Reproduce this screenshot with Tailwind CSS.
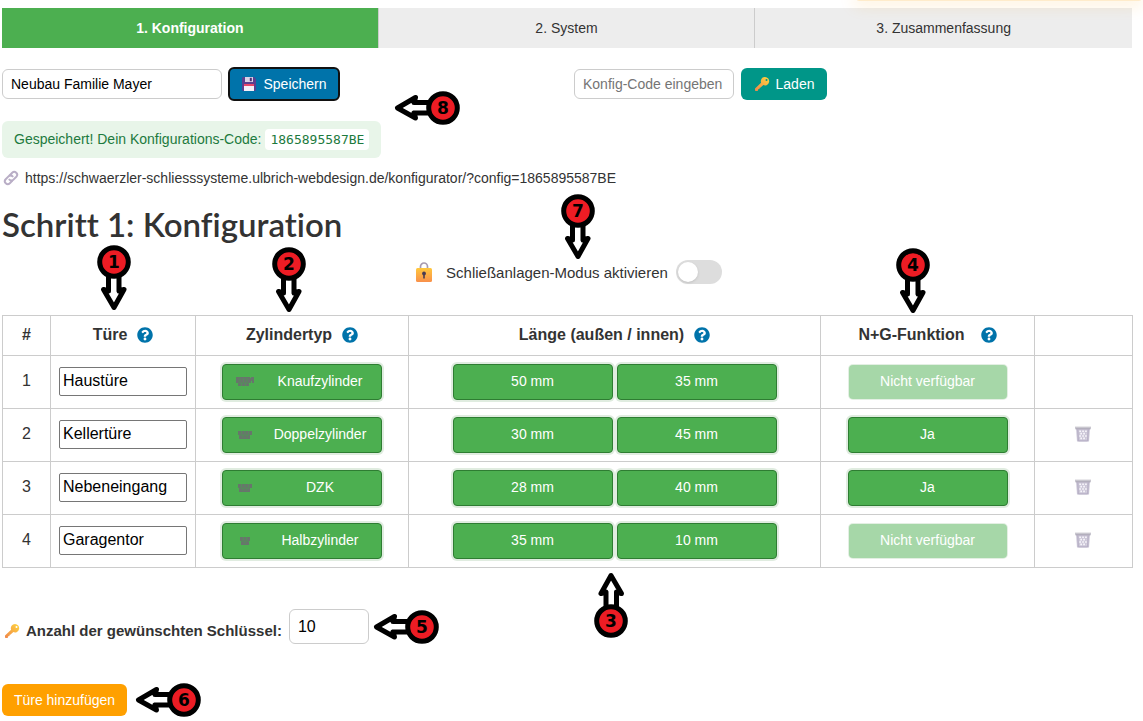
<!DOCTYPE html>
<html lang="de">
<head>
<meta charset="utf-8">
<meta name="viewport" content="width=device-width, initial-scale=1">
<title>Konfigurator</title>
<script src="https://cdn.jsdelivr.net/npm/@tailwindcss/browser@4"></script>
</head>
<body class="bg-white font-['Liberation_Sans',Arial,sans-serif] text-sm text-[#333]">
<svg class="absolute size-0" aria-hidden="true">
  <defs>
    <linearGradient id="gold" x1="0" y1="0" x2="0" y2="1"><stop offset="0" stop-color="#ffc83d"/><stop offset="1" stop-color="#f9904b"/></linearGradient>
    <linearGradient id="gold2" x1="1" y1="0" x2="0" y2="1"><stop offset="0" stop-color="#ffd53d"/><stop offset="1" stop-color="#f0864b"/></linearGradient>
    <symbol id="help" viewBox="0 0 512 512"><path fill="currentColor" d="M504 256c0 136.997-111.043 248-248 248S8 392.997 8 256C8 119.083 119.043 8 256 8s248 111.083 248 248zM262.655 90c-54.497 0-89.255 22.957-116.549 63.758-3.536 5.286-2.353 12.415 2.715 16.258l34.699 26.31c5.205 3.947 12.621 3.008 16.665-2.122 17.864-22.658 30.113-35.797 57.303-35.797 20.429 0 45.698 13.148 45.698 32.958 0 14.976-12.363 22.667-32.534 33.976C247.128 238.528 216 254.941 216 296v4c0 6.627 5.373 12 12 12h56c6.627 0 12-5.373 12-12v-1.333c0-28.462 83.186-29.647 83.186-106.667 0-58.002-60.165-102-116.531-102zM256 338c-25.365 0-46 20.635-46 46 0 25.364 20.635 46 46 46s46-20.636 46-46c0-25.365-20.635-46-46-46z"/></symbol>
    <symbol id="key" viewBox="0 0 16 16"><path fill="url(#gold2)" fill-rule="evenodd" d="M11 1a4.200 4.200 0 0 0-3.900 5.700L1.300 12.200c-.2.200-.3.400-.3.700V14c0 .6.400 1 1 1h1.200c.5 0 .8-.3.800-.8v-.9h.9c.4 0 .7-.3.700-.7v-.9h.7l3.100-2.600A4.200 4.200 0 1 0 11 1zm1.500 1.900a1 1 0 1 1 0 2 1 1 0 0 1 0-2z"/></symbol>
    <symbol id="trash" viewBox="0 0 16 16"><path fill="#ccc7d8" d="M1 2h14l-1 13.500H2z"/><path fill="none" stroke="#f8f6fb" stroke-width="1.600" stroke-dasharray="1.700 1.200" d="M4.300 5.200h8"/><path fill="none" stroke="#f8f6fb" stroke-width="1.600" stroke-dasharray="1.700 1.200" d="M5.300 7.600h6M4.300 10h8M5.300 12.400h6"/><path fill="none" stroke="#b3acc2" stroke-width="1" d="M2.800 3.500l.5 11.400h9.400l.5-11.400"/><path fill="#c9c7cf" d="M0 .6h16v2H0z"/><path fill="#a49fb0" d="M.4 2.400h15.200v.9H.4z"/></symbol>
    <symbol id="arrow" viewBox="0 0 34 66"><path fill="#fff" stroke="#000" stroke-width="5" stroke-linejoin="round" d="M11.500 29v17l-5-1.500L17 62.500l10-18-5 1.500V29"/><circle cx="17" cy="17" r="14.300" fill="#ed1c24" stroke="#000" stroke-width="5"/></symbol>
  </defs>
</svg>

<div class="relative overflow-hidden">
  <!-- notice that reaches in from above the page -->
  <div class="absolute right-0 -top-2 z-10 h-[9px] w-72 rounded-lg bg-[#ffeccb] shadow-[0_3px_16px_2px_rgba(255,165,0,0.14)]"></div>

  <main class="pt-2 pr-[11px] pb-1 pl-0.5">
    <nav class="grid h-10 grid-cols-3">
      <a href="#" class="flex items-center justify-center border-r border-[#ccc] bg-[#4caf50] font-bold text-white">1. Konfiguration</a>
      <a href="#" class="flex items-center justify-center border-r border-[#ccc] bg-[#ededed]">2. System</a>
      <a href="#" class="flex items-center justify-center bg-[#ededed]">3. Zusammenfassung</a>
    </nav>

    <div class="mt-[19px] grid grid-cols-2 gap-3.5">
      <div class="flex items-center gap-1.5">
        <input type="text" aria-label="Projektname" value="Neubau Familie Mayer" class="h-[30px] w-[220px] rounded-md border border-[#ccc] px-2 text-black">
        <button class="flex h-[34px] w-28 items-center justify-center gap-1.5 rounded-md border-2 border-[#111] bg-[#0073aa] text-white">
          <svg class="size-4" viewBox="0 0 16 16"><path fill="#5b3f8f" d="M1 2.500C1 1.700 1.700 1 2.500 1H13l2 2v10.500c0 .8-.7 1.500-1.500 1.500h-11C1.700 15 1 14.300 1 13.500z"/><path fill="#d9d2e6" d="M4 1h8v5H4z"/><path fill="#4a2f78" d="M8.800 1.800h2v3.400h-2z"/><path fill="#f4f1fa" d="M3 8.500h10V15H3z"/><path fill="#e8486a" d="M3 8h10v2H3z"/></svg>
          Speichern
        </button>
      </div>
      <div class="flex items-center gap-[7px]">
        <input type="text" aria-label="Konfig-Code" placeholder="Konfig-Code eingeben" class="h-[30px] w-40 rounded-md border border-[#ccc] px-2 placeholder:text-[#757575]">
        <button class="flex h-8 w-[86px] items-center justify-center gap-1.5 rounded-md bg-[#009688] text-white">
          <svg class="size-4"><use href="#key"/></svg>
          Laden
        </button>
      </div>
    </div>

    <div class="mt-5 flex h-[37px] w-fit items-center gap-1 rounded-md bg-[#e8f5e9] px-3 pb-px text-[#1d7a3e]">
      <span>Gespeichert! Dein Konfigurations-Code:</span>
      <code class="rounded-sm bg-white px-[5px] font-['DejaVu_Sans_Mono',monospace] text-[13px] leading-[21px]">1865895587BE</code>
    </div>

    <div class="mt-2.5 flex h-5 items-center gap-1.5">
      <svg class="ml-px size-4" viewBox="0 0 16 16" fill="none" stroke="#b9aec6" stroke-width="2" stroke-linecap="round"><path d="M6.800 5.200l2.400-2.500a2.900 2.900 0 0 1 4.100 4.100l-2.800 2.800a2.900 2.900 0 0 1-4.100 0"/><path d="M9.200 10.800l-2.400 2.500a2.900 2.900 0 0 1-4.100-4.100l2.800-2.800a2.900 2.900 0 0 1 4.100 0"/></svg>
      <span>https://schwaerzler-schliesssysteme.ulbrich-webdesign.de/konfigurator/?config=1865895587BE</span>
    </div>

    <h1 class="mt-4 font-['Lato',sans-serif] text-[33px] leading-10 font-semibold [font-variant-ligatures:none]">Schritt 1: Konfiguration</h1>

    <label class="mt-4 flex h-6 items-center justify-center pl-0.5">
      <svg class="size-5" viewBox="0 0 20 20"><path d="M6.500 9V4.500a3.500 3.500 0 0 1 7 0V9" fill="none" stroke="#a79bb0" stroke-width="1.700"/><rect x="2" y="6" width="16" height="14" rx="1.500" fill="url(#gold)"/><circle cx="10" cy="11.500" r="1.900" fill="#4a3c52"/><path d="M9.200 12h1.600v4.500H9.200z" fill="#4a3c52"/></svg>
      <span class="mr-2 ml-3 pt-0.5 text-[15px]">Schließanlagen-Modus aktivieren</span>
      <input type="checkbox" role="switch" class="h-6 w-[46px] appearance-none rounded-full bg-[#ddd] p-0.5 before:block before:size-5 before:rounded-full before:bg-white before:shadow-sm checked:bg-[#4caf50] checked:before:ml-auto">
    </label>

    <table class="mt-[31px] w-full table-fixed border-collapse text-center text-base [&_td]:border [&_td]:border-[#ccc] [&_td]:p-0 [&_th]:border [&_th]:border-[#ccc] [&_th]:pb-0.5">
      <colgroup><col class="w-12"><col class="w-[145px]"><col class="w-[213px]"><col class="w-[412px]"><col class="w-[214px]"><col class="w-[98px]"></colgroup>
      <thead>
        <tr class="h-10">
          <th>#</th>
          <th><span class="flex items-center justify-center gap-2.5">Türe <button aria-label="Hilfe" class="text-[#0073aa]"><svg class="size-4"><use href="#help"/></svg></button></span></th>
          <th><span class="flex items-center justify-center gap-2.5">Zylindertyp <button aria-label="Hilfe" class="text-[#0073aa]"><svg class="size-4"><use href="#help"/></svg></button></span></th>
          <th><span class="flex items-center justify-center gap-2.5">Länge (außen / innen) <button aria-label="Hilfe" class="text-[#0073aa]"><svg class="size-4"><use href="#help"/></svg></button></span></th>
          <th><span class="flex items-center justify-center gap-4">N+G-Funktion <button aria-label="Hilfe" class="text-[#0073aa]"><svg class="size-4"><use href="#help"/></svg></button></span></th>
          <th></th>
        </tr>
      </thead>
      <tbody class="[&_.num]:pb-0.5 [&_.pick]:h-9 [&_.pick]:w-40 [&_.pick]:rounded-sm [&_.pick]:border [&_.pick]:border-[#2e7d32] [&_.pick]:bg-[#4caf50] [&_.pick]:pb-0.5 [&_.pick]:text-sm [&_.pick]:text-white [&_.pick]:shadow-[0_0_0_2px_rgba(46,125,50,0.15)] [&_.off]:h-[34px] [&_.off]:w-[158px] [&_.off]:rounded-sm [&_.off]:bg-[#a6d7a8] [&_.off]:pb-0.5 [&_.off]:text-sm [&_.off]:text-white [&_.off]:shadow-[0_0_0_1px_#e3efe3] [&_.door]:h-[29px] [&_.door]:w-32 [&_.door]:rounded-xs [&_.door]:border [&_.door]:border-[#767676] [&_.door]:px-[3px] [&_.door]:pb-0.5 [&_.door]:text-black [&_.group]:flex [&_.group]:items-center [&_.group]:justify-center [&_.group]:gap-1 [&_.lift]:pb-px [&_.bin]:pr-0.5 [&_.bin]:pb-[3px]">
        <tr class="h-[53px]">
          <td><div class="num">1</div></td>
          <td><div class="group lift"><input class="door" aria-label="Türe 1" value="Haustüre"></div></td>
          <td><div class="group"><button class="pick flex items-center gap-3 px-2.5"><svg class="h-3 w-6" viewBox="0 0 24 12" fill="#68756c"><path d="M3 2h14v1h1V2h3v6h-2V6h-1v2h-2v3H5V8H3z"/><path stroke="#4f9a54" stroke-width=".7" d="M7 3v4M10.500 3v4M14 3v4M5 8h11M8.500 8v3M12.500 8v3"/></svg><span class="flex-1">Knaufzylinder</span></button></div></td>
          <td><div class="group"><button class="pick">50 mm</button><button class="pick">35 mm</button></div></td>
          <td><div class="group"><button class="off" disabled>Nicht verfügbar</button></div></td>
          <td></td>
        </tr>
        <tr class="h-[53px]">
          <td><div class="num">2</div></td>
          <td><div class="group lift"><input class="door" aria-label="Türe 2" value="Kellertüre"></div></td>
          <td><div class="group"><button class="pick flex items-center gap-3 px-2.5"><svg class="h-3 w-6" viewBox="0 0 24 12" fill="#68756c"><path d="M5 3h14v4h-2v4H6V7H5z"/><path stroke="#4f9a54" stroke-width=".7" d="M8.500 3v3M12 3v3M15.500 3v3M6 7h11M10 7v3M14 7v3"/></svg><span class="flex-1">Doppelzylinder</span></button></div></td>
          <td><div class="group"><button class="pick">30 mm</button><button class="pick">45 mm</button></div></td>
          <td><div class="group"><button class="pick">Ja</button></div></td>
          <td><div class="group bin"><button aria-label="Löschen"><svg class="size-4"><use href="#trash"/></svg></button></div></td>
        </tr>
        <tr class="h-[53px]">
          <td><div class="num">3</div></td>
          <td><div class="group lift"><input class="door" aria-label="Türe 3" value="Nebeneingang"></div></td>
          <td><div class="group"><button class="pick flex items-center gap-3 px-2.5"><svg class="h-3 w-6" viewBox="0 0 24 12" fill="#68756c"><path d="M5 3h14v4h-2v4H6V7H5z"/><path stroke="#4f9a54" stroke-width=".7" d="M8.500 3v3M12 3v3M15.500 3v3M6 7h11M10 7v3M14 7v3"/></svg><span class="flex-1">DZK</span></button></div></td>
          <td><div class="group"><button class="pick">28 mm</button><button class="pick">40 mm</button></div></td>
          <td><div class="group"><button class="pick">Ja</button></div></td>
          <td><div class="group bin"><button aria-label="Löschen"><svg class="size-4"><use href="#trash"/></svg></button></div></td>
        </tr>
        <tr class="h-[53px]">
          <td><div class="num">4</div></td>
          <td><div class="group lift"><input class="door" aria-label="Türe 4" value="Garagentor"></div></td>
          <td><div class="group"><button class="pick flex items-center gap-3 px-2.5"><svg class="h-3 w-6" viewBox="0 0 24 12" fill="#68756c"><path d="M7 3h10v4h-1v4H8V7H7z"/><path stroke="#4f9a54" stroke-width=".7" d="M10.500 3v3M13.500 3v3M8 7h8M12 7v3"/></svg><span class="flex-1">Halbzylinder</span></button></div></td>
          <td><div class="group"><button class="pick">35 mm</button><button class="pick">10 mm</button></div></td>
          <td><div class="group"><button class="off" disabled>Nicht verfügbar</button></div></td>
          <td><div class="group bin"><button aria-label="Löschen"><svg class="size-4"><use href="#trash"/></svg></button></div></td>
        </tr>
      </tbody>
    </table>

    <div class="mt-[41px] flex items-end gap-[7px]">
      <label for="keys" class="flex items-center gap-1.5 pb-[3px] pl-0.5 text-[15px] leading-5 font-bold"><svg class="size-4"><use href="#key"/></svg>Anzahl der gewünschten Schlüssel:</label>
      <input id="keys" type="text" inputmode="numeric" value="10" class="h-[35px] w-20 rounded-md border border-[#ccc] px-2 text-base text-black">
    </div>

    <button class="mt-10 h-8 w-[125px] rounded-md bg-[#ffa000] text-white">Türe hinzufügen</button>
  </main>

  <!-- numbered pointers laid over the form -->
  <div class="font-['DejaVu_Sans',sans-serif] text-[17px] font-bold text-black">
    <svg class="absolute top-[245px] left-[97px] size-[34px] overflow-visible"><use href="#arrow" width="34" height="66"/><text x="17" y="23" text-anchor="middle">1</text></svg>
    <svg class="absolute top-[247px] left-[272px] size-[34px] overflow-visible"><use href="#arrow" width="34" height="66"/><text x="17" y="23" text-anchor="middle">2</text></svg>
    <svg class="absolute top-[604px] left-[594px] size-[34px] overflow-visible"><use href="#arrow" width="34" height="66" transform="rotate(180 17 17)"/><text x="17" y="23" text-anchor="middle">3</text></svg>
    <svg class="absolute top-[248px] left-[896px] size-[34px] overflow-visible"><use href="#arrow" width="34" height="66"/><text x="17" y="23" text-anchor="middle">4</text></svg>
    <svg class="absolute top-[610px] left-[405px] size-[34px] overflow-visible"><use href="#arrow" width="34" height="66" transform="rotate(90 17 17)"/><text x="17" y="23" text-anchor="middle">5</text></svg>
    <svg class="absolute top-[683px] left-[167px] size-[34px] overflow-visible"><use href="#arrow" width="34" height="66" transform="rotate(90 17 17)"/><text x="17" y="23" text-anchor="middle">6</text></svg>
    <svg class="absolute top-[194px] left-[561px] size-[34px] overflow-visible"><use href="#arrow" width="34" height="66"/><text x="17" y="23" text-anchor="middle">7</text></svg>
    <svg class="absolute top-[91px] left-[426px] size-[34px] overflow-visible"><use href="#arrow" width="34" height="66" transform="rotate(90 17 17)"/><text x="17" y="23" text-anchor="middle">8</text></svg>
  </div>
</div>
</body>
</html>
